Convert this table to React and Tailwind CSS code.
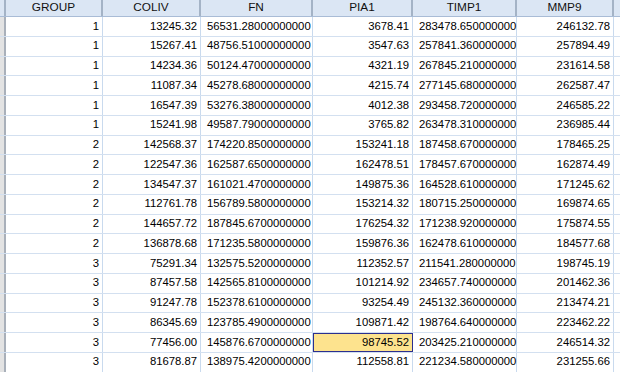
import React from "react";

const cols = [
  { name: "GROUP", w: "w-[97px]", align: "text-right" },
  { name: "COLIV", w: "w-[98px]", align: "text-right" },
  { name: "FN", w: "w-[112px]", align: "text-left" },
  { name: "PIA1", w: "w-[100px]", align: "text-right" },
  { name: "TIMP1", w: "w-[104px]", align: "text-left" },
  { name: "MMP9", w: "w-[97px]", align: "text-right" },
];

const rows = [
  ["1", "13245.32", "56531.28000000000", "3678.41", "283478.650000000", "246132.78"],
  ["1", "15267.41", "48756.51000000000", "3547.63", "257841.360000000", "257894.49"],
  ["1", "14234.36", "50124.47000000000", "4321.19", "267845.210000000", "231614.58"],
  ["1", "11087.34", "45278.68000000000", "4215.74", "277145.680000000", "262587.47"],
  ["1", "16547.39", "53276.38000000000", "4012.38", "293458.720000000", "246585.22"],
  ["1", "15241.98", "49587.79000000000", "3765.82", "263478.310000000", "236985.44"],
  ["2", "142568.37", "174220.8500000000", "153241.18", "187458.670000000", "178465.25"],
  ["2", "122547.36", "162587.6500000000", "162478.51", "178457.670000000", "162874.49"],
  ["2", "134547.37", "161021.4700000000", "149875.36", "164528.610000000", "171245.62"],
  ["2", "112761.78", "156789.5800000000", "153214.32", "180715.250000000", "169874.65"],
  ["2", "144657.72", "187845.6700000000", "176254.32", "171238.920000000", "175874.55"],
  ["2", "136878.68", "171235.5800000000", "159876.36", "162478.610000000", "184577.68"],
  ["3", "75291.34", "132575.5200000000", "112352.57", "211541.280000000", "198745.19"],
  ["3", "87457.58", "142565.8100000000", "101214.92", "234657.740000000", "201462.36"],
  ["3", "91247.78", "152378.6100000000", "93254.49", "245132.360000000", "213474.21"],
  ["3", "86345.69", "123785.4900000000", "109871.42", "198764.640000000", "223462.22"],
  ["3", "77456.00", "145876.6700000000", "98745.52", "203425.210000000", "246514.32"],
  ["3", "81678.87", "138975.4200000000", "112558.81", "221234.580000000", "231255.66"],
];

export default function App() {
  return (
    <div
      className="w-[620px] h-[372px] overflow-hidden bg-white text-[11.3px] text-black"
      style={{ fontFamily: '"Liberation Sans", Arial, sans-serif' }}
    >
      {/* header */}
      <div className="flex h-[17px] bg-[#dbe6f4] border-b border-[#a9bcd6] text-[11.8px] text-[#111]">
        <div className="w-[6px] shrink-0 border-r-2 border-[#a4b3c6]" />
        {cols.map((c) => (
          <div
            key={c.name}
            className={`${c.w} shrink-0 border-r-2 border-[#a4b3c6] flex items-center justify-center leading-none`}
          >
            {c.name}
          </div>
        ))}
        <div className="flex-1" />
      </div>
      {/* body */}
      {rows.map((r, i) => (
        <div key={i} className="flex h-[19.76px] border-b border-[#d3e0f0]">
          <div className="w-[6px] shrink-0 bg-[#e3e3e3] border-r-2 border-[#a9b0ba]" />
          {r.map((v, j) => {
            const c = cols[j];
            const hl = i === 16 && j === 3;
            return (
              <div
                key={j}
                className={`${c.w} shrink-0 flex items-center leading-none border-r ${
                  c.align === "text-right" ? "justify-end pr-[3px]" : "justify-start pl-[6px]"
                } ${hl ? "bg-[#fde38e] border border-[#2b2f8f]" : "border-[#c9daee]"}`}
              >
                {v}
              </div>
            );
          })}
          <div className="flex-1" />
        </div>
      ))}
    </div>
  );
}
